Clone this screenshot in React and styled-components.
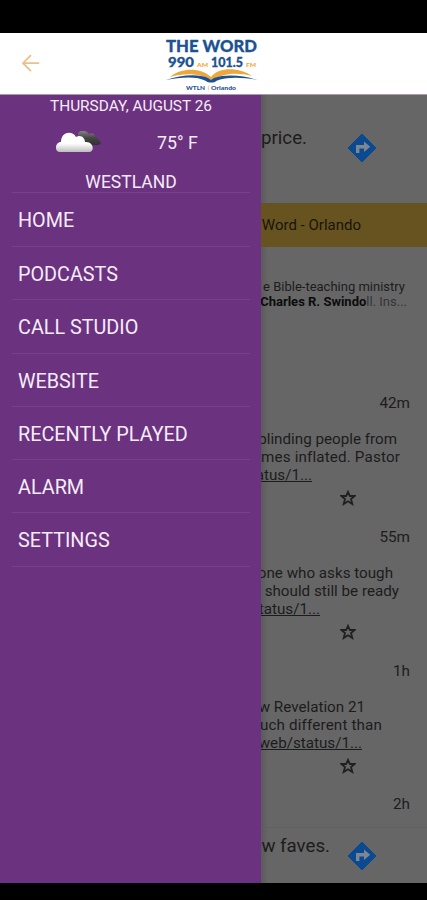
import React from "react";
import styled, { createGlobalStyle } from "styled-components";

const COLORS = {
  primary: "#6b327f",
  divider: "#78418b",
  dimmed: "#666666",
  gold: "#67531f",
  navy: "#1c5291",
  orange: "#eda83c",
};

const menuItems = [
  "HOME",
  "PODCASTS",
  "CALL STUDIO",
  "WEBSITE",
  "RECENTLY PLAYED",
  "ALARM",
  "SETTINGS",
];

const posts = [
  {
    time: "42m",
    lines: [
      { text: "blinding people from", right: 30 },
      { text: "mes inflated. Pastor", right: 27, spacing: 0.15 },
    ],
    link: { text: "atus/1...", right: 115 },
  },
  {
    time: "55m",
    lines: [
      { text: "one who asks tough", right: 34 },
      { text: "should still be ready", right: 28 },
    ],
    link: { text: "tatus/1...", right: 107 },
  },
  {
    time: "1h",
    lines: [
      { text: "w Revelation 21", right: 62 },
      { text: "uch different than", right: 45, spacing: 0.15 },
    ],
    link: { text: "web/status/1...", right: 65 },
  },
];

const Logo = () => (
  <LogoSvg viewBox="0 0 94 56" role="img">
    <g fontFamily="Lato, sans-serif" fontWeight="900" fill={COLORS.navy} stroke={COLORS.navy} strokeWidth="0.3">
      <text x="1" y="15.5" fontSize="17.5" textLength="91" lengthAdjust="spacingAndGlyphs">THE WORD</text>
      <text x="3" y="30.5" fontSize="13.5" textLength="26" lengthAdjust="spacingAndGlyphs">990</text>
      <text x="46" y="30.5" fontSize="13.5" textLength="32" lengthAdjust="spacingAndGlyphs">101.5</text>
    </g>
    <g fontFamily="Lato, sans-serif" fontWeight="900" fontSize="6" fill={COLORS.orange}>
      <text x="32" y="30.5" textLength="11" lengthAdjust="spacingAndGlyphs">AM</text>
      <text x="81" y="30.5" textLength="10" lengthAdjust="spacingAndGlyphs">FM</text>
    </g>
    <path d="M5 41 C16 32 35 31 46 41 C55 30 75 32 87 40 C72 36 57 37 47 45 C36 37 20 37 5 41Z" fill={COLORS.orange} />
    <path d="M1 44 C17 38 35 38 43 42 L46 44 L49 42 C60 38 78 39 92 44 C76 41 61 41 51 45 C50 47 43 47 41 45 C32 40 16 41 1 44Z" fill={COLORS.navy} />
    <g fontFamily="Lato, sans-serif" fontWeight="900" fontSize="5.6" fill={COLORS.navy}>
      <text x="21" y="54" textLength="19" lengthAdjust="spacingAndGlyphs">WTLN</text>
      <text x="46" y="54" textLength="25" lengthAdjust="spacingAndGlyphs">Orlando</text>
    </g>
    <path d="M43.3 49.5v5" stroke={COLORS.orange} strokeWidth="0.6" />
  </LogoSvg>
);

const BackArrow = () => (
  <svg width="20" height="20" viewBox="0 0 20 20" fill="none" stroke="#eac08c" strokeWidth="1.8">
    <path d="M18.2 9.2H2M10 1.2L2 9.2L10 17.2" />
  </svg>
);

const Cloud = () => (
  <svg width="46" height="24" viewBox="0 0 46 24">
    <defs>
      <linearGradient id="light" x1="0" y1="0" x2="0" y2="1">
        <stop offset="0.55" stopColor="#ffffff" />
        <stop offset="1" stopColor="#bdbdbd" />
      </linearGradient>
      <linearGradient id="dark" x1="0" y1="0" x2="0" y2="1">
        <stop offset="0" stopColor="#858585" />
        <stop offset="0.5" stopColor="#454545" />
        <stop offset="1" stopColor="#303030" />
      </linearGradient>
    </defs>
    <path d="M22 6C21 1 25 -1 28 0C31 0 32 2 33 3C36 1 39 3 39 6C42 7 44 10 45 12Q44 14 41 14H28Z" fill="url(#dark)" />
    <path d="M4 21C-2 21-1 11 5 11C5 1 16 -1 20 6C25 3 29 7 29 11C38 10 39 21 33 21Z" fill="url(#light)" />
  </svg>
);

const Directions = () => (
  <svg width="30" height="30" viewBox="0 0 30 30">
    <path d="M15 1L29 15L15 29L1 15Z" fill="#0b4a90" stroke="#0b4a90" strokeWidth="1" strokeLinejoin="round" />
    <path d="M9 20V12H17V8.5L23.2 13.8L17 19V15.4H12.4V20Z" fill="#7d8791" />
  </svg>
);

const Star = () => (
  <svg width="16" height="16" viewBox="0 0 16 16" fill="none" stroke="#202020" strokeWidth="1.8">
    <path d="M8 1.8L9.9 6H14.6L11 9L12.3 14L8 11.2L3.7 14L5 9L1.4 6H6.1Z" />
  </svg>
);

const App = () => {
  return (
    <Screen>
      <GlobalStyle />
      <StatusBar />
      <Header>
        <BackArrow />
        <Logo />
      </Header>
      <Body>
        <Drawer>
          <DateText>THURSDAY, AUGUST 26</DateText>
          <Weather>
            <Cloud />
            <Temperature>75° F</Temperature>
          </Weather>
          <City>WESTLAND</City>
          <Menu>
            {menuItems.map((item) => (
              <MenuItem key={item}>{item}</MenuItem>
            ))}
          </Menu>
        </Drawer>
        <Content>
          <Ad $height={108} $top={30}>
            <AdText $right={120}>price.</AdText>
            <AdIcon $top={8}><Directions /></AdIcon>
          </Ad>
          <StationBar>Word - Orlando</StationBar>
          <About>
            <AboutLine $right={22}>e Bible-teaching ministry</AboutLine>
            <AboutLine $right={20}>
              <strong>Charles R. Swindo</strong><Faded>ll. Ins...</Faded>
            </AboutLine>
          </About>
          {posts.map((post) => (
            <Post key={post.time}>
              <Time>{post.time}</Time>
              <PostText>
                {post.lines.map((line) => (
                  <Line key={line.text} $right={line.right} $spacing={line.spacing}>{line.text}</Line>
                ))}
                <Line $right={post.link.right}><u>{post.link.text}</u></Line>
              </PostText>
              <Actions><Star /></Actions>
            </Post>
          ))}
          <LastTime>2h</LastTime>
          <Ad $height={55} $top={5} $border>
            <AdText $right={97}>ew faves.</AdText>
            <AdIcon $top={8}><Directions /></AdIcon>
          </Ad>
        </Content>
      </Body>
      <NavBar />
    </Screen>
  );
};

const GlobalStyle = createGlobalStyle`
  body {
    margin: 0;
    background: #000;
    font-family: Roboto, sans-serif;
  }
`;

const Screen = styled.div`
  display: flex;
  flex-direction: column;
  width: 427px;
  height: 900px;
  overflow: hidden;
`;

const StatusBar = styled.div`
  height: 33px;
  background: #000;
`;

const NavBar = styled.div`
  height: 17px;
  background: #000;
`;

const Header = styled.header`
  display: flex;
  align-items: center;
  box-sizing: border-box;
  height: 62px;
  padding-left: 21px;
  background: #fff;
  border-bottom: 1px solid #a89cab;
`;

const LogoSvg = styled.svg`
  width: 94px;
  height: 56px;
  margin-left: 124px;
`;

const Body = styled.div`
  display: flex;
  height: 788px;
`;

const Drawer = styled.nav`
  display: flex;
  flex-direction: column;
  flex: none;
  box-sizing: border-box;
  width: 261px;
  padding: 0 11px 0 12px;
  background: ${COLORS.primary};
  color: #f5ecf8;
`;

const DateText = styled.div`
  height: 21px;
  font-size: 15.4px;
  line-height: 23px;
  text-align: center;
`;

const Weather = styled.div`
  display: flex;
  align-items: center;
  height: 54px;
  padding-left: 44px;
`;

const Temperature = styled.div`
  margin-left: 55px;
  font-size: 17.8px;
  line-height: 19px;
  padding-bottom: 1px;
`;

const City = styled.div`
  height: 22px;
  font-size: 17.5px;
  line-height: 24px;
  text-align: center;
`;

const Menu = styled.div`
  border-top: 1px solid ${COLORS.divider};
`;

const MenuItem = styled.div`
  box-sizing: border-box;
  height: 53.3px;
  padding-left: 6px;
  border-bottom: 1px solid ${COLORS.divider};
  font-size: 19.8px;
  line-height: 56px;

  &:first-child {
    height: 54px;
  }
`;

const Content = styled.main`
  flex: 1;
  min-width: 0;
  overflow: hidden;
  background: linear-gradient(to right, #5a5a5a, ${COLORS.dimmed} 7px);
  color: #1c1c1c;
`;

const Ad = styled.div`
  display: flex;
  justify-content: flex-end;
  box-sizing: border-box;
  height: ${(props) => props.$height}px;
  padding-top: ${(props) => props.$top}px;
  border-top: ${(props) => (props.$border ? "1px solid #606060" : "none")};
`;

const AdText = styled.div`
  width: ${(props) => 166 - props.$right}px;
  display: flex;
  justify-content: flex-end;
  font-size: 18.7px;
  line-height: 26px;
  white-space: nowrap;
`;

const AdIcon = styled.div`
  margin: ${(props) => props.$top}px 50px 0 auto;
  height: 30px;
`;

const StationBar = styled.div`
  display: flex;
  justify-content: flex-end;
  height: 44px;
  padding-right: 66px;
  background: ${COLORS.gold};
  color: #18150d;
  font-size: 15px;
  line-height: 45px;
  white-space: nowrap;
`;

const About = styled.div`
  box-sizing: border-box;
  height: 147px;
  padding-top: 32px;
`;

const AboutLine = styled.div`
  display: flex;
  justify-content: flex-end;
  padding-right: ${(props) => props.$right}px;
  font-size: 13px;
  line-height: 15px;
  white-space: pre;

  strong {
    color: #0c0c0c;
  }
`;

const Faded = styled.span`
  color: #353535;
`;

const Post = styled.article`
  height: 133.8px;
`;

const Time = styled.div`
  padding-right: 17px;
  font-size: 15.3px;
  line-height: 18px;
  text-align: right;
`;

const LastTime = styled(Time)`
  height: 32px;
`;

const PostText = styled.div`
  margin-top: 18px;
`;

const Line = styled.div`
  display: flex;
  justify-content: flex-end;
  padding-right: ${(props) => props.$right}px;
  font-size: 15.2px;
  line-height: 18px;
  letter-spacing: ${(props) => props.$spacing || 0}px;
  white-space: nowrap;
`;

const Actions = styled.div`
  display: flex;
  justify-content: flex-end;
  padding: 6px 71px 0 0;
`;

export default App;
